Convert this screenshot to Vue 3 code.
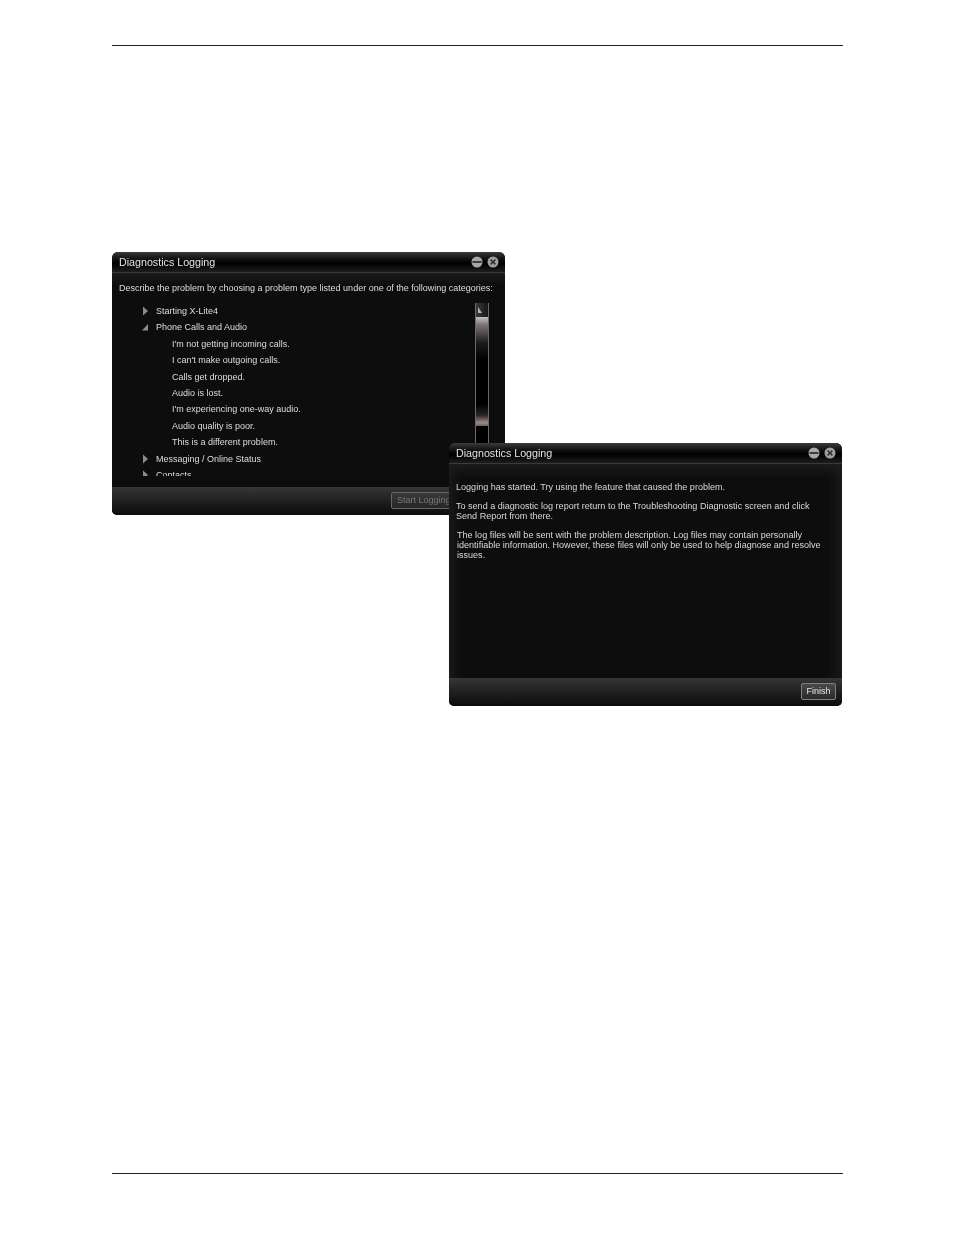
<template>
  <div class="page">
    <div class="rule"></div>

    <div class="stage">
      <section class="win win-back">
        <header class="titlebar">
          <span class="title">Diagnostics Logging</span>
          <span class="controls">
            <svg class="ctl" viewBox="0 0 12 12"><circle cx="6" cy="6" r="5.5" fill="#a8a8a8" /><rect x="1.5" y="5.2" width="9" height="1.6" fill="#222" /></svg>
            <svg class="ctl" viewBox="0 0 12 12"><circle cx="6" cy="6" r="5.5" fill="#a0a0a0" /><path d="M3.6 3.6l4.8 4.8M8.4 3.6l-4.8 4.8" stroke="#333" stroke-width="1.5" /></svg>
          </span>
        </header>
        <div class="body body-back">
          <p class="intro">Describe the problem by choosing a problem type listed under one of the following categories:</p>
          <div class="tree-wrap">
            <ul class="tree">
              <li v-for="item in tree" :key="item.label" :class="{ child: item.child }">
                <svg v-if="!item.child" class="arrow" viewBox="0 0 8 10">
                  <path v-if="item.open" d="M1 8.5L7 8.5L7 2Z" fill="#8c8c8c" />
                  <path v-else d="M2 0.5L7 5L2 9.5Z" fill="#8c8c8c" />
                </svg>
                {{ item.label }}
              </li>
            </ul>
            <div class="scrollbar">
              <span class="scroll-up">
                <svg class="scroll-arrow" viewBox="0 0 6 8"><path d="M1 7L1 1L5 7Z" fill="#b5b5b5" /></svg>
              </span>
              <span class="scroll-thumb"></span>
            </div>
          </div>
        </div>
        <footer class="footer">
          <button class="btn btn-off">Start Logging</button>
        </footer>
      </section>

      <section class="win win-front">
        <header class="titlebar">
          <span class="title">Diagnostics Logging</span>
          <span class="controls">
            <svg class="ctl" viewBox="0 0 12 12"><circle cx="6" cy="6" r="5.5" fill="#a8a8a8" /><rect x="1.5" y="5.2" width="9" height="1.6" fill="#222" /></svg>
            <svg class="ctl" viewBox="0 0 12 12"><circle cx="6" cy="6" r="5.5" fill="#a0a0a0" /><path d="M3.6 3.6l4.8 4.8M8.4 3.6l-4.8 4.8" stroke="#333" stroke-width="1.5" /></svg>
          </span>
        </header>
        <div class="body body-front">
          <p>Logging has started. Try using the feature that caused the problem.</p>
          <p>To send a diagnostic log report return to the Troubleshooting Diagnostic screen and click Send Report from there.</p>
          <p class="indent">The log files will be sent with the problem description. Log files may contain personally identifiable information. However, these files will only be used to help diagnose and resolve issues.</p>
        </div>
        <footer class="footer">
          <button class="btn">Finish</button>
        </footer>
      </section>
    </div>

    <div class="rule rule-bottom"></div>
  </div>
</template>

<script setup>
const tree = [
  { label: 'Starting X-Lite4' },
  { label: 'Phone Calls and Audio', open: true },
  { label: "I'm not getting incoming calls.", child: true },
  { label: "I can't make outgoing calls.", child: true },
  { label: 'Calls get dropped.', child: true },
  { label: 'Audio is lost.', child: true },
  { label: "I'm experiencing one-way audio.", child: true },
  { label: 'Audio quality is poor.', child: true },
  { label: 'This is a different problem.', child: true },
  { label: 'Messaging / Online Status' },
  { label: 'Contacts' }
]
</script>

<style>
html,
body {
  margin: 0;
  background: #fff;
}
</style>

<style scoped>
.page {
  display: flex;
  flex-direction: column;
  box-sizing: border-box;
  width: 954px;
  height: 1235px;
  padding: 45px 111px 0 112px;
  font-family: "Liberation Sans", Arial, sans-serif;
}

.rule {
  flex: none;
  height: 1px;
  background: #222;
}

.rule-bottom {
  margin-top: 467px;
}

.stage {
  position: relative;
  flex: none;
  height: 454px;
  margin-top: 206px;
}

.win {
  display: flex;
  flex-direction: column;
  width: 393px;
  height: 263px;
  overflow: hidden;
  color: #dedede;
  background: #0d0d0e;
  border-radius: 6px 6px 5px 5px;
  filter: blur(0.3px);
}

.win-front {
  position: absolute;
  top: 191px;
  left: 337px;
}

.titlebar {
  display: flex;
  flex: none;
  align-items: center;
  justify-content: space-between;
  box-sizing: border-box;
  height: 21px;
  padding: 0 6px 0 7px;
  background: linear-gradient(#3c3c3c 0, #1c1c1c 5px, #000 11px, #1d1d1d 20px);
  border-bottom: 1px solid #3a3a3a;
}

.title {
  font-size: 10.7px;
  color: #e4e4e4;
}

.controls {
  display: flex;
  gap: 4px;
}

.ctl {
  width: 12px;
  height: 12px;
}

.body {
  flex: 1;
  min-height: 0;
  font-size: 9px;
  line-height: 10px;
}

.body p {
  margin: 0;
}

.body-back {
  display: flex;
  flex-direction: column;
  padding: 10px 7px 0;
  overflow: hidden;
  background: linear-gradient(#1b1b1d, #0d0d0e 12px);
}

.intro {
  white-space: nowrap;
}

.tree-wrap {
  display: flex;
  justify-content: space-between;
  height: 180px;
  margin-top: 10px;
  overflow: hidden;
}

.tree {
  height: 173px;
  margin: 0;
  padding: 0 0 0 22px;
  overflow: hidden;
  list-style: none;
}

.tree li {
  position: relative;
  height: 16.4px;
  padding-left: 15px;
  line-height: 16px;
  white-space: nowrap;
}

.tree li.child {
  padding-left: 31px;
}

.arrow {
  position: absolute;
  top: 3px;
  left: 0;
  width: 8px;
  height: 10px;
}

.scrollbar {
  display: flex;
  flex: none;
  flex-direction: column;
  box-sizing: border-box;
  width: 14px;
  margin-right: 9px;
  background: #000;
  border-right: 1px solid #6a6a6a;
  border-left: 1px solid #6a6a6a;
}

.scroll-up {
  display: flex;
  flex: none;
  align-items: center;
  height: 14px;
  background: linear-gradient(90deg, #3a3a3a, #161616);
}

.scroll-arrow {
  width: 6px;
  height: 8px;
  margin-left: 1px;
}

.scroll-thumb {
  flex: none;
  height: 109px;
  background: linear-gradient(#c9c0bc 0, #7a7472 8px, #1c1a1a 26px, #000 40%, #000 80%, #2a2322 90%, #a08a86 97%, #6d5f5c 100%);
}

.body-front {
  padding: 18px 17px 0 7px;
  font-size: 9.05px;
  color: #d8d8d8;
  background:
    linear-gradient(#1b1b1d, rgba(13, 13, 14, 0) 14px),
    linear-gradient(90deg, #19191b, #0d0d0e 12px, #0d0d0e calc(100% - 14px), #19191b);
}

.body-front p + p {
  margin-top: 9px;
}

.body-front .indent {
  padding-left: 1px;
}

.footer {
  display: flex;
  flex: none;
  align-items: center;
  justify-content: flex-end;
  box-sizing: border-box;
  height: 28px;
  padding: 0 6px 2px;
  background: linear-gradient(#363636, #1d1d1d 55%, #0c0c0c);
}

.btn {
  height: 17px;
  padding: 0 4.5px;
  font-family: inherit;
  font-size: 9px;
  color: #e4e4e4;
  background: linear-gradient(#4a4a4a, #2a2a2a);
  border: 1px solid #808080;
  border-radius: 2px;
}

.btn-off {
  margin-right: 43px;
  color: #777;
  background: linear-gradient(#3a3a3a, #262626);
  border-color: #666;
}
</style>
